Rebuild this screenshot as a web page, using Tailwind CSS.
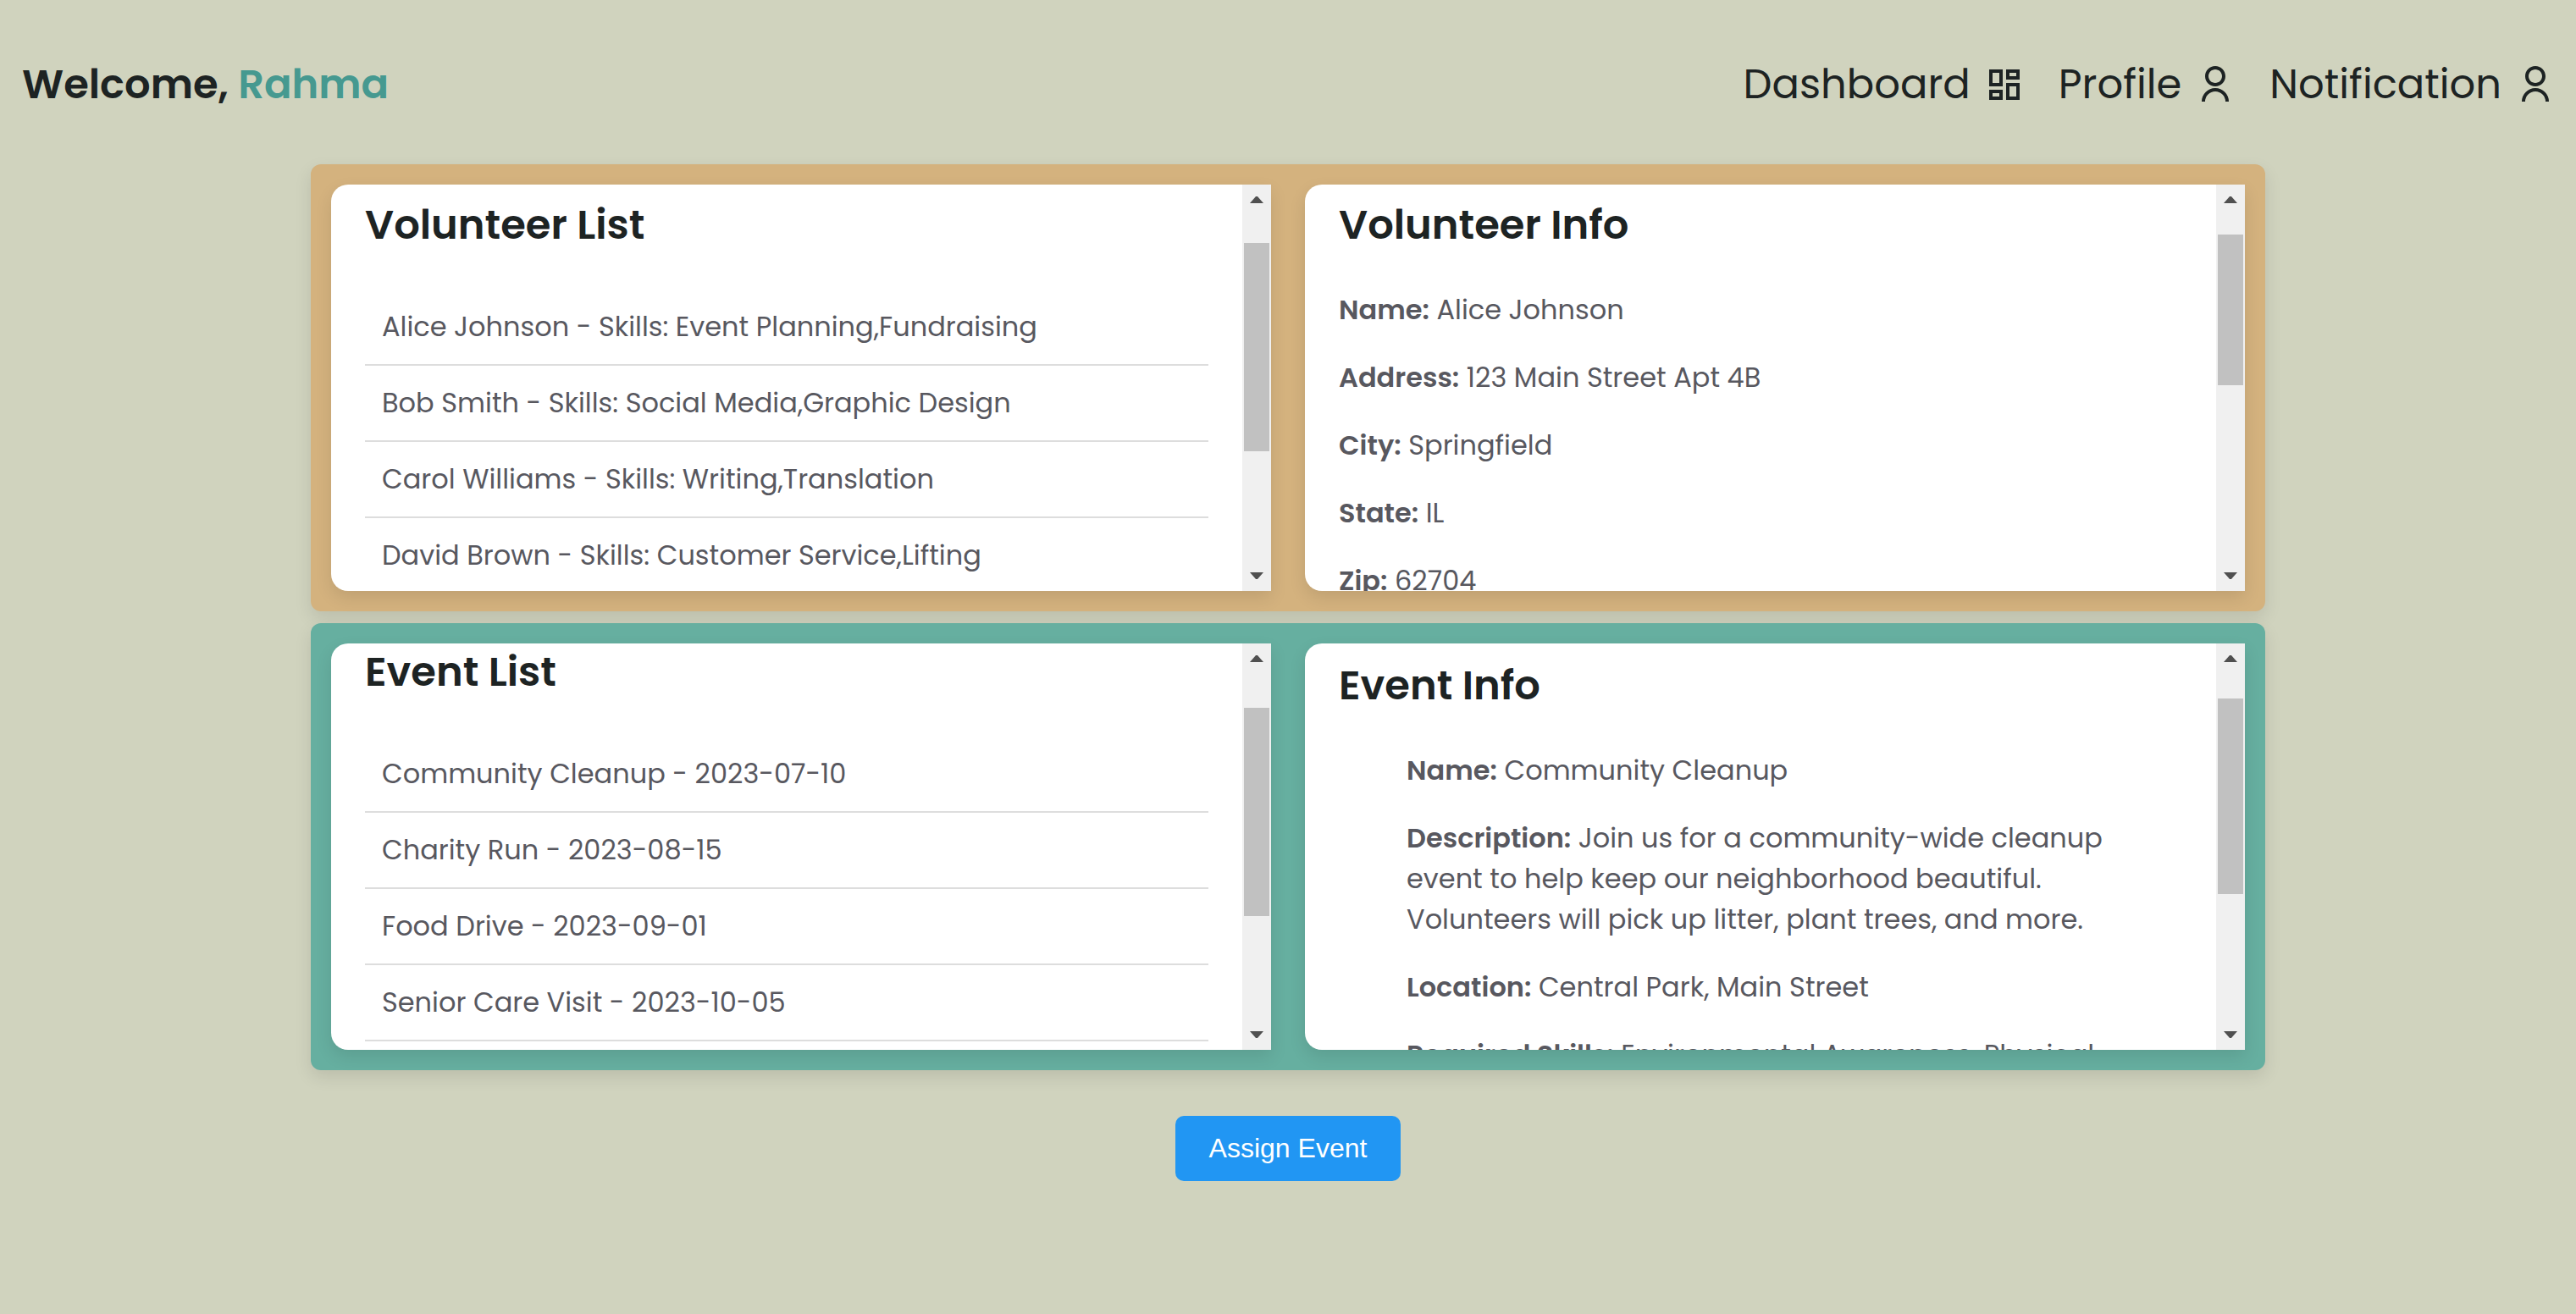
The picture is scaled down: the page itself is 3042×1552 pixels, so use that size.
<!DOCTYPE html>
<html lang="en">
<head>
<meta charset="utf-8">
<title>Volunteer Dashboard</title>
<script src="https://cdn.jsdelivr.net/npm/@tailwindcss/browser@4"></script>
</head>
<body class="min-h-screen bg-[#d0d3be] font-['Poppins','Inter',sans-serif] text-[32px] leading-[48px] text-[#58585f]">

<svg class="hidden" aria-hidden="true">
  <symbol id="icon-dashboard" viewBox="0 0 24 24"><path d="M13 21V11h8v10h-8zM3 13V3h8v10H3zm6-2V5H5v6h4zM3 21v-6h8v6H3zm2-2h4v-2H5v2zm10 0h4v-6h-4v6zM13 3h8v6h-8V3zm2 2v2h4V5h-4z"/></symbol>
  <symbol id="icon-user" viewBox="0 0 24 24"><path d="M4 22a8 8 0 1 1 16 0h-2a6 6 0 1 0-12 0H4zm8-9c-3.315 0-6-2.685-6-6s2.685-6 6-6 6 2.685 6 6-2.685 6-6 6zm0-2c2.21 0 4-1.79 4-4s-1.79-4-4-4-4 1.79-4 4 1.79 4 4 4z"/></symbol>
  <symbol id="icon-up" viewBox="0 0 16 8"><path d="M0 8 7 0h2l7 8z"/></symbol>
  <symbol id="icon-down" viewBox="0 0 16 8"><path d="M0 0h16L9 8H7z"/></symbol>
</svg>

<header class="flex items-center justify-between pt-16 pr-6 pb-[58px] pl-[26px] text-5xl leading-[72px] text-[#1d2323]">
  <h1 class="font-semibold">Welcome, <span class="text-[#469990]">Rahma</span></h1>
  <nav class="flex items-center gap-10">
    <a href="#dashboard" class="flex items-center gap-4">Dashboard <svg class="size-12 fill-current"><use href="#icon-dashboard"/></svg></a>
    <a href="#profile" class="flex items-center gap-4">Profile <svg class="size-12 fill-current"><use href="#icon-user"/></svg></a>
    <a href="#notification" class="flex items-center gap-4">Notification <svg class="size-12 fill-current"><use href="#icon-user"/></svg></a>
  </nav>
</header>

<main class="mx-auto flex w-full max-w-[2308px] flex-col items-center">
  <div class="flex w-full flex-col gap-[14px]">

    <!-- Volunteers -->
    <div class="grid grid-cols-2 gap-10 rounded-xl bg-[#d4b27e] p-6 shadow-[0_8px_20px_rgba(0,0,0,0.1)]">
      <section class="flex h-[480px] overflow-hidden rounded-l-[20px] bg-white shadow-[0_8px_20px_rgba(0,0,0,0.1)]">
        <div class="min-w-0 flex-1 px-10 pt-3">
          <h2 class="mb-10 text-5xl leading-[72px] font-semibold text-[#1d2323]">Volunteer List</h2>
          <ul>
            <li class="border-b-2 border-[#dddddd] p-5">Alice Johnson - Skills: Event Planning,Fundraising</li>
            <li class="border-b-2 border-[#dddddd] p-5">Bob Smith - Skills: Social Media,Graphic Design</li>
            <li class="border-b-2 border-[#dddddd] p-5">Carol Williams - Skills: Writing,Translation</li>
            <li class="border-b-2 border-[#dddddd] p-5">David Brown - Skills: Customer Service,Lifting</li>
          </ul>
        </div>
        <div class="flex w-[34px] flex-col items-center justify-between bg-[#f0f0f0] py-[14px]" aria-hidden="true">
          <svg class="h-2 w-4 fill-[#505050]"><use href="#icon-up"/></svg>
          <div class="flex w-[30px] flex-1 flex-col pt-[47px]"><div class="h-[246px] bg-[#c1c1c1]"></div></div>
          <svg class="h-2 w-4 fill-[#505050]"><use href="#icon-down"/></svg>
        </div>
      </section>

      <section class="flex h-[480px] overflow-hidden rounded-l-[20px] bg-white shadow-[0_8px_20px_rgba(0,0,0,0.1)]">
        <div class="min-w-0 flex-1 px-10 pt-3">
          <h2 class="mb-10 text-5xl leading-[72px] font-semibold text-[#1d2323]">Volunteer Info</h2>
          <div class="flex flex-col gap-8">
            <p><strong class="font-semibold">Name:</strong> Alice Johnson</p>
            <p><strong class="font-semibold">Address:</strong> 123 Main Street Apt 4B</p>
            <p><strong class="font-semibold">City:</strong> Springfield</p>
            <p><strong class="font-semibold">State:</strong> IL</p>
            <p><strong class="font-semibold">Zip:</strong> 62704</p>
          </div>
        </div>
        <div class="flex w-[34px] flex-col items-center justify-between bg-[#f0f0f0] py-[14px]" aria-hidden="true">
          <svg class="h-2 w-4 fill-[#505050]"><use href="#icon-up"/></svg>
          <div class="flex w-[30px] flex-1 flex-col pt-[37px]"><div class="h-[178px] bg-[#c1c1c1]"></div></div>
          <svg class="h-2 w-4 fill-[#505050]"><use href="#icon-down"/></svg>
        </div>
      </section>
    </div>

    <!-- Events -->
    <div class="grid grid-cols-2 gap-10 rounded-xl bg-[#66afa0] p-6 shadow-[0_8px_20px_rgba(0,0,0,0.1)]">
      <section class="flex h-[480px] overflow-hidden rounded-l-[20px] bg-white shadow-[0_8px_20px_rgba(0,0,0,0.1)]">
        <div class="min-w-0 flex-1 px-10">
          <h2 class="-mt-[2px] mb-10 text-5xl leading-[72px] font-semibold text-[#1d2323]">Event List</h2>
          <ul>
            <li class="border-b-2 border-[#dddddd] p-5">Community Cleanup - 2023-07-10</li>
            <li class="border-b-2 border-[#dddddd] p-5">Charity Run - 2023-08-15</li>
            <li class="border-b-2 border-[#dddddd] p-5">Food Drive - 2023-09-01</li>
            <li class="border-b-2 border-[#dddddd] p-5">Senior Care Visit - 2023-10-05</li>
          </ul>
        </div>
        <div class="flex w-[34px] flex-col items-center justify-between bg-[#f0f0f0] py-[14px]" aria-hidden="true">
          <svg class="h-2 w-4 fill-[#505050]"><use href="#icon-up"/></svg>
          <div class="flex w-[30px] flex-1 flex-col pt-[54px]"><div class="h-[246px] bg-[#c1c1c1]"></div></div>
          <svg class="h-2 w-4 fill-[#505050]"><use href="#icon-down"/></svg>
        </div>
      </section>

      <section class="flex h-[480px] overflow-hidden rounded-l-[20px] bg-white shadow-[0_8px_20px_rgba(0,0,0,0.1)]">
        <div class="min-w-0 flex-1 px-10 pt-[14px]">
          <h2 class="mb-10 text-5xl leading-[72px] font-semibold text-[#1d2323]">Event Info</h2>
          <div class="flex flex-col gap-8 px-20">
            <p><strong class="font-semibold">Name:</strong> Community Cleanup</p>
            <p><strong class="font-semibold">Description:</strong> Join us for a community-wide cleanup event to help keep our neighborhood beautiful. Volunteers will pick up litter, plant trees, and more.</p>
            <p><strong class="font-semibold">Location:</strong> Central Park, Main Street</p>
            <p><strong class="font-semibold">Required Skills:</strong> Environmental Awareness, Physical</p>
          </div>
        </div>
        <div class="flex w-[34px] flex-col items-center justify-between bg-[#f0f0f0] py-[14px]" aria-hidden="true">
          <svg class="h-2 w-4 fill-[#505050]"><use href="#icon-up"/></svg>
          <div class="flex w-[30px] flex-1 flex-col pt-[43px]"><div class="h-[231px] bg-[#c1c1c1]"></div></div>
          <svg class="h-2 w-4 fill-[#505050]"><use href="#icon-down"/></svg>
        </div>
      </section>
    </div>
  </div>

  <button type="button" class="mt-[54px] rounded-[10px] bg-[#2196f3] px-10 py-5 font-['Liberation_Sans',Arial,sans-serif] text-[32px] leading-[37px] text-white">Assign Event</button>
</main>
</body>
</html>
